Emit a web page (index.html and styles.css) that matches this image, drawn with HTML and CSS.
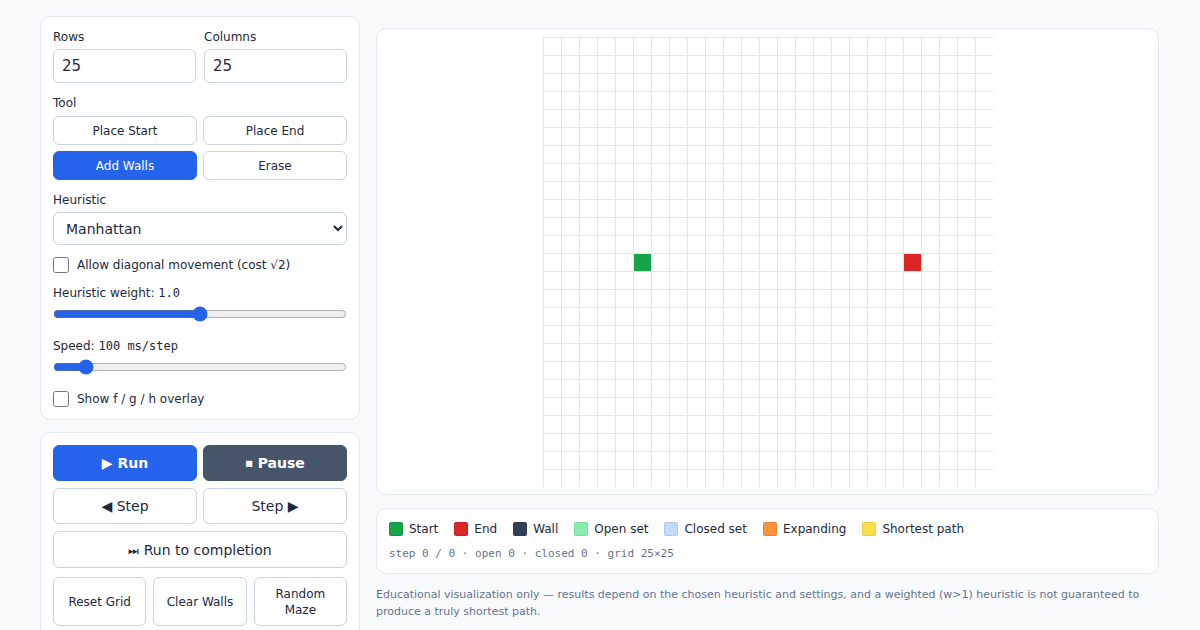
FILE: index.html
```html
<!DOCTYPE html>
<html lang="en">
<head>
  <meta charset="utf-8">
  <title>A* pathfinding visualizer</title>
  <link rel="stylesheet" href="styles.css">
</head>
<body>

<div id="app">
  <aside class="sidebar">
    <section class="card settings">
      <div class="pair">
        <label class="field">
          <span class="label">Rows</span>
          <input type="number" class="num" value="25">
        </label>
        <label class="field">
          <span class="label">Columns</span>
          <input type="number" class="num" value="25">
        </label>
      </div>

      <div class="field">
        <span class="label">Tool</span>
        <div class="tools">
          <button class="btn">Place Start</button>
          <button class="btn">Place End</button>
          <button class="btn active">Add Walls</button>
          <button class="btn">Erase</button>
        </div>
      </div>

      <label class="field">
        <span class="label">Heuristic</span>
        <select class="select">
          <option>Manhattan</option>
          <option>Euclidean</option>
          <option>Chebyshev</option>
          <option>Octile</option>
        </select>
      </label>

      <label class="check"><input type="checkbox"> Allow diagonal movement (cost √2)</label>

      <label class="field">
        <span class="label">Heuristic weight: <code>1.0</code></span>
        <input type="range" class="range" min="0" max="2" step="0.1" value="1">
      </label>

      <label class="field">
        <span class="label">Speed: <code>100 ms/step</code></span>
        <input type="range" class="range" min="10" max="1000" step="10" value="100">
      </label>

      <label class="check"><input type="checkbox"> Show f / g / h overlay</label>
    </section>

    <section class="card controls">
      <div class="pair">
        <button class="btn big primary">▶ Run</button>
        <button class="btn big dark"><span class="sq">■</span> Pause</button>
        <button class="btn big">◀ Step</button>
        <button class="btn big">Step ▶</button>
        <button class="btn big wide"><span class="skip">⏭</span> Run to completion</button>
      </div>
      <div class="triple">
        <button class="btn">Reset Grid</button>
        <button class="btn">Clear Walls</button>
        <button class="btn">Random<br>Maze</button>
      </div>
    </section>
  </aside>

  <main class="stage">
    <div class="card board-card">
      <div class="board">
        <div class="cell start" style="grid-row: 13; grid-column: 6"></div>
        <div class="cell end" style="grid-row: 13; grid-column: 21"></div>
      </div>
    </div>

    <div class="card legend">
      <div class="keys">
        <span class="key"><i class="sw start"></i>Start</span>
        <span class="key"><i class="sw end"></i>End</span>
        <span class="key"><i class="sw wall"></i>Wall</span>
        <span class="key"><i class="sw open"></i>Open set</span>
        <span class="key"><i class="sw closed"></i>Closed set</span>
        <span class="key"><i class="sw expanding"></i>Expanding</span>
        <span class="key"><i class="sw path"></i>Shortest path</span>
      </div>
      <div class="stats">step 0 / 0 · open 0 · closed 0 · grid 25×25</div>
    </div>

    <p class="note">Educational visualization only — results depend on the chosen heuristic and settings, and a weighted (w&gt;1) heuristic is not guaranteed to produce a truly shortest path.</p>
  </main>
</div>

</body>
</html>
```

FILE: styles.css
```css
* {
  box-sizing: border-box;
}

body {
  margin: 0;
  font-family: "DejaVu Sans", sans-serif;
  font-size: 12px;
  color: #1e293b;
  background-color: #f8fafc;
}

#app {
  display: grid;
  grid-template-columns: 320px 1fr;
  gap: 16px;
  padding: 16px 41px 0 40px;
}

.card {
  background-color: #fff;
  border: 1px solid #e2e8f0;
  border-radius: 10px;
}

/* left column */
.sidebar {
  display: flex;
  flex-direction: column;
  gap: 12px;
}

.settings {
  display: flex;
  flex-direction: column;
  gap: 12px;
  padding: 12px;
}

.pair {
  display: grid;
  grid-template-columns: 1fr 1fr;
  gap: 8px;
}

.field {
  display: flex;
  flex-direction: column;
  min-width: 0;
}

.label {
  line-height: 16px;
  margin-bottom: 4px;
}

code {
  font-family: "DejaVu Sans Mono", monospace;
  font-size: 12px;
}

.num {
  width: 100%;
  min-width: 0;
  height: 34px;
  padding: 0 8px;
  font: 15px "DejaVu Sans", sans-serif;
  color: #1e293b;
  border: 1px solid #cbd5e1;
  border-radius: 6px;
  -moz-appearance: textfield;
}
.num::-webkit-inner-spin-button,
.num::-webkit-outer-spin-button {
  -webkit-appearance: none;
  margin: 0;
}

.tools {
  display: grid;
  grid-template-columns: 1fr 1fr;
  gap: 6px 6px;
  margin-top: 1px;
}

.btn {
  height: 29px;
  padding: 0 6px;
  font: 12px "DejaVu Sans", sans-serif;
  color: #1e293b;
  background-color: #fff;
  border: 1px solid #cbd5e1;
  border-radius: 6px;
  cursor: pointer;
}
.btn.active,
.btn.primary {
  color: #fff;
  background-color: #2563eb;
  border-color: #2563eb;
}
.btn.dark {
  color: #fff;
  background-color: #475569;
  border-color: #475569;
}

.select {
  height: 33px;
  padding: 0 8px;
  font: 14px "DejaVu Sans", sans-serif;
  color: #1e293b;
  background-color: #fff;
  border: 1px solid #cbd5e1;
  border-radius: 6px;
}

.check {
  display: flex;
  align-items: center;
  gap: 8px;
  line-height: 16px;
}
.check input {
  width: 16px;
  height: 16px;
  margin: 0;
}

.range {
  width: 100%;
  height: 16px;
  margin: 1px 0 4px;
  accent-color: #2563eb;
}

/* run controls */
.controls {
  padding: 12px;
}
.controls .pair {
  gap: 7px 6px;
}

.btn.big {
  height: 36px;
  font-size: 14px;
}
.btn.primary,
.btn.dark {
  font-weight: bold;
}
.btn.wide {
  grid-column: 1 / 3;
  height: 37px;
}

.sq {
  font-size: 8px;
  vertical-align: 2px;
}
.skip {
  font-size: 12px;
}

.triple {
  display: grid;
  grid-template-columns: repeat(3, 1fr);
  gap: 7px;
  margin-top: 9px;
}
.triple .btn {
  height: 49px;
  line-height: 16px;
}

/* right column */
.stage {
  display: flex;
  flex-direction: column;
  padding-top: 12px;
}

.board-card {
  display: flex;
  justify-content: center;
  padding: 8px 8px 7px;
}

.board {
  display: grid;
  grid-template-columns: repeat(25, 18px);
  grid-template-rows: repeat(25, 18px);
  background-image:
    linear-gradient(to right, #e2e6ec 1px, transparent 1px),
    linear-gradient(to bottom, #e2e6ec 1px, transparent 1px);
  background-size: 18px 18px;
}

.cell {
  margin: 1px 0 0 1px;
}
.cell.start { background-color: #16a34a; }
.cell.end { background-color: #dc2626; }

.legend {
  margin-top: 13px;
  padding: 12px 12px 13px;
}

.keys {
  display: flex;
  flex-wrap: wrap;
  gap: 16px;
  line-height: 16px;
}

.key {
  display: flex;
  align-items: center;
  gap: 6px;
}

.sw {
  display: inline-block;
  width: 14px;
  height: 14px;
  border-radius: 2px;
  border: 1px solid rgba(0,0,0,.08);
}
.sw.start { background-color: #16a34a; }
.sw.end { background-color: #dc2626; }
.sw.wall { background-color: #334155; }
.sw.open { background-color: #86efac; }
.sw.closed { background-color: #bfdbfe; }
.sw.expanding { background-color: #fb923c; }
.sw.path { background-color: #fde047; }

.stats {
  margin-top: 10px;
  font-family: "DejaVu Sans Mono", monospace;
  font-size: 11px;
  color: #64748b;
}

.note {
  margin: 12px 0 0;
  font-size: 11px;
  line-height: 17px;
  color: #64748b;
}
```
